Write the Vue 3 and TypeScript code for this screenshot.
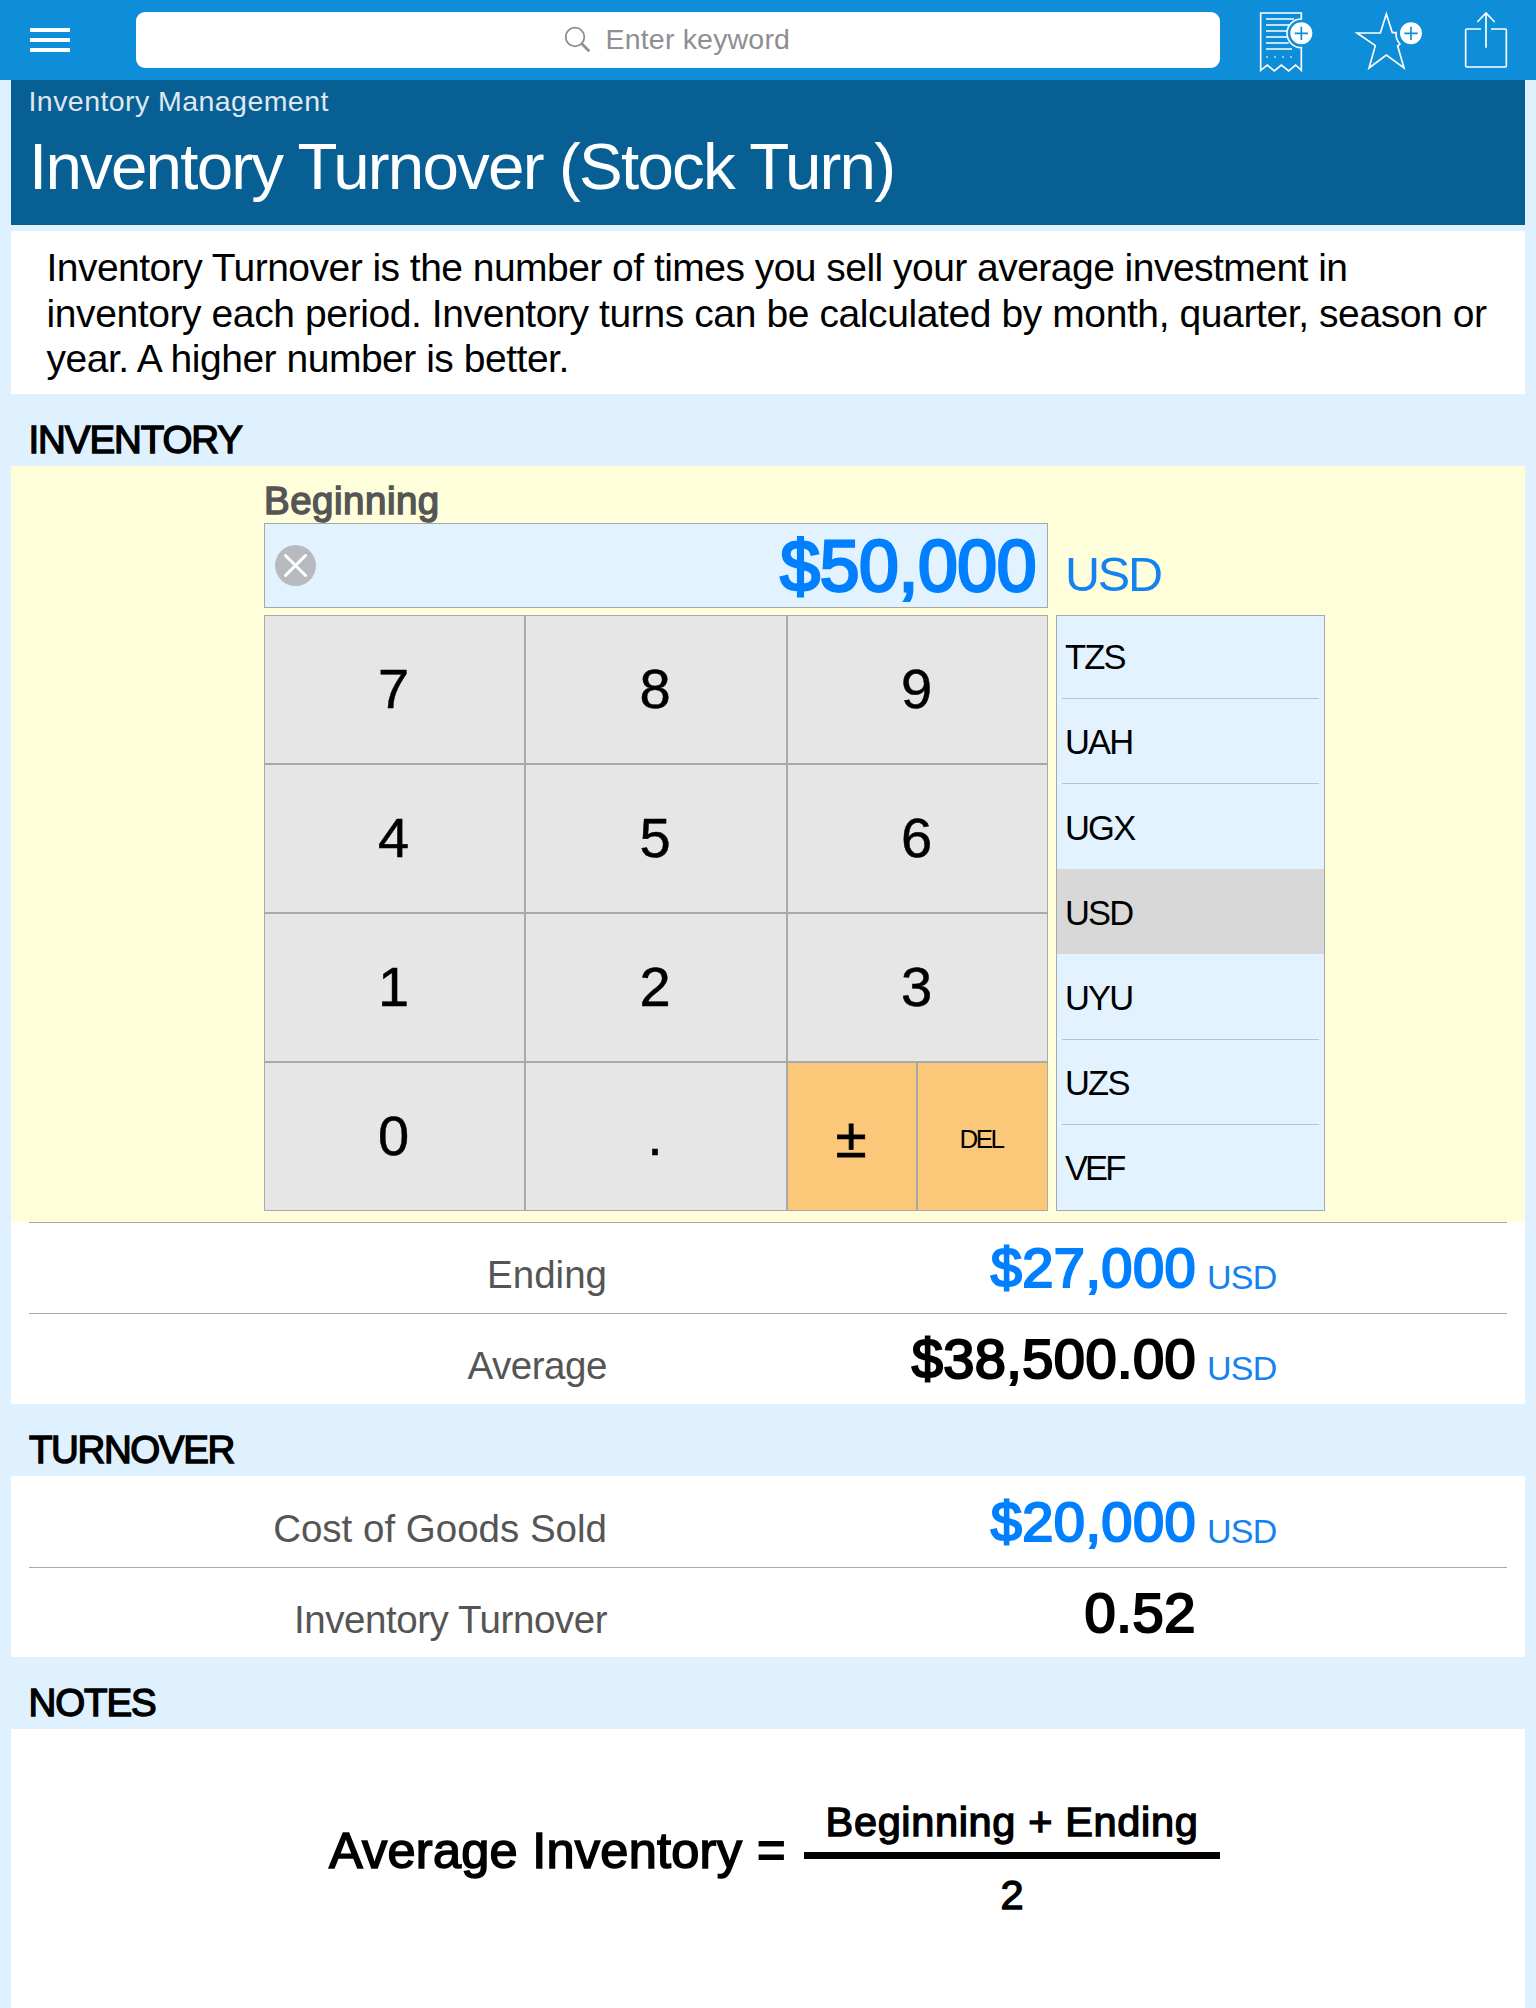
<script setup lang="ts">
interface Row {
  label: string
  value: string
  unit?: string
  editable?: boolean
}

const description: string[] = [
  'Inventory Turnover is the number of times you sell your average investment in',
  'inventory each period. Inventory turns can be calculated by month, quarter, season or',
  'year. A higher number is better.',
]
const digits: string[] = ['7', '8', '9', '4', '5', '6', '1', '2', '3', '0', '.']
const currencies: string[] = ['TZS', 'UAH', 'UGX', 'USD', 'UYU', 'UZS', 'VEF']
const selected = 'USD'

const inventoryRows: Row[] = [
  { label: 'Ending', value: '$27,000', unit: 'USD', editable: true },
  { label: 'Average', value: '$38,500.00', unit: 'USD' },
]
const turnoverRows: Row[] = [
  { label: 'Cost of Goods Sold', value: '$20,000', unit: 'USD', editable: true },
  { label: 'Inventory Turnover', value: '0.52' },
]
</script>

<template>
  <div class="app">
    <header class="topbar">
      <div class="menu"><i></i><i></i><i></i></div>
      <div class="search">
        <svg width="28" height="28" viewBox="0 0 28 28" fill="none" stroke="#8e8e93">
          <circle cx="11" cy="11" r="9.3" stroke-width="1.8" />
          <path d="M17.6 17.6L25.3 25.3" stroke-width="2.8" />
        </svg>
        <span>Enter keyword</span>
      </div>
      <div class="actions">
        <svg width="60" height="80" viewBox="60 0 180 240" fill="none" stroke="#fff" stroke-width="5">
          <path d="M196 57V39H74V211L94 195L115 213L136 195L158 213L179 195L196 211V143A43 43 0 0 1 196 57Z" />
          <path d="M90 57H174M90 75H160M90 93H153M90 111H153M90 129H158M90 147H168" />
          <path d="M91 171H95M115 171H119M139 171H143M163 171H167" />
          <circle cx="196" cy="100" r="33" fill="#fff" stroke="none" />
          <path d="M176 100H216M196 80V120" stroke="#0e8cd8" />
        </svg>
        <svg width="75" height="80" viewBox="345 0 225 240" fill="none" stroke="#fff" stroke-width="5">
          <path d="M451 42L433 99H363L418 137L399 204L451 165L504 204L485 138L492 132A45 45 0 0 1 480 98H469Z" />
          <circle cx="525" cy="100" r="33" fill="#fff" stroke="none" />
          <path d="M505 100H545M525 80V120" stroke="#0e8cd8" />
        </svg>
        <svg width="50" height="80" viewBox="675 0 150 240" fill="none" stroke="#fff" stroke-width="5">
          <path d="M735 87H692Q689 87 689 90V198Q689 201 692 201H808Q811 201 811 198V90Q811 87 808 87H765" />
          <path d="M750 143V39M724 66L750 39L776 66" />
        </svg>
      </div>
    </header>

    <main>
      <div class="hero">
        <div class="crumb">Inventory Management</div>
        <h1>Inventory Turnover (Stock Turn)</h1>
      </div>

      <p class="desc"><span v-for="line in description" :key="line">{{ line }} </span></p>

      <h2>INVENTORY</h2>
      <section class="editor">
        <div class="editor-label">Beginning</div>
        <div class="entry">
          <div class="field">
            <svg width="41" height="41" viewBox="0 0 41 41">
              <circle cx="20.5" cy="20.5" r="20.5" fill="#b7bbbf" />
              <path d="M10.5 10.5L30.5 30.5M30.5 10.5L10.5 30.5" stroke="#fff" stroke-width="3" stroke-linecap="round" />
            </svg>
            <span>$50,000</span>
          </div>
          <div class="entry-unit">USD</div>
        </div>
        <div class="pads">
          <div class="keypad">
            <div v-for="d in digits" :key="d" class="key">{{ d }}</div>
            <div class="split">
              <div class="key op sign">±</div>
              <div class="key op del">DEL</div>
            </div>
          </div>
          <div class="picker">
            <ul>
              <li v-for="c in currencies" :key="c" :class="{ on: c === selected }"><span>{{ c }}</span></li>
            </ul>
          </div>
        </div>
      </section>
      <section class="rows lined">
        <div v-for="r in inventoryRows" :key="r.label" class="row">
          <span class="label">{{ r.label }}</span>
          <span class="value" :class="{ editable: r.editable }">{{ r.value }}</span>
          <span v-if="r.unit" class="unit">{{ r.unit }}</span>
        </div>
      </section>

      <h2 class="turnover">TURNOVER</h2>
      <section class="rows">
        <div v-for="r in turnoverRows" :key="r.label" class="row">
          <span class="label">{{ r.label }}</span>
          <span class="value" :class="{ editable: r.editable, plain: !r.unit }">{{ r.value }}</span>
          <span v-if="r.unit" class="unit">{{ r.unit }}</span>
        </div>
      </section>

      <h2>NOTES</h2>
      <section class="notes">
        <div class="formula-name">Average Inventory <b>=</b></div>
        <div class="fraction">
          <div class="num">Beginning + Ending</div>
          <div class="bar"></div>
          <div class="den">2</div>
        </div>
      </section>
    </main>
  </div>
</template>

<style>
body { background: #dff1fe; }
</style>

<style scoped>
.app {
  width: 1536px;
  height: 2008px;
  overflow: hidden;
  background: #dff1fe;
  font-family: "Liberation Sans", Arial, sans-serif;
  color: #000;
  white-space: nowrap;
}
.topbar {
  height: 80px;
  box-sizing: border-box;
  background: #0e8dd9;
  display: flex;
  align-items: center;
  padding-left: 30px;
}
.menu { width: 40px; display: flex; flex-direction: column; gap: 6px; }
.menu i { height: 4px; background: #fff; }
.search {
  width: 1084px;
  height: 56px;
  margin-left: 66px;
  border-radius: 9px;
  background: #fff;
  box-sizing: border-box;
  padding-left: 428px;
  display: flex;
  align-items: center;
  color: #8e8e93;
  font-size: 28.5px;
  letter-spacing: 0.19px;
}
.search span { margin-left: 13.5px; line-height: 54px; height: 56px; }
.actions { display: flex; margin-left: 36px; height: 80px; }
.actions svg { display: block; flex: none; }
.actions svg:nth-child(2) { margin-left: 35px; }
.actions svg:nth-child(3) { margin-left: 35px; }

main { padding: 0 11px; }
.hero {
  height: 145px;
  background: #085f94;
  color: #fff;
  padding-left: 17.5px;
  box-sizing: border-box;
}
.crumb { font-size: 28.5px; line-height: 42px; letter-spacing: 0.44px; color: #dfe8f0; }
h1 { margin: 5px 0 0 0.5px; font-weight: 400; font-size: 65.5px; line-height: 80px; letter-spacing: -1.8px; }

.desc {
  margin: 6px 0 0;
  height: 163px;
  box-sizing: border-box;
  padding: 14px 0 0 35.5px;
  background: #fff;
  font-size: 39px;
  line-height: 45.6px;
}
.desc span { display: block; letter-spacing: -0.53px; }
.desc span:nth-child(2) { letter-spacing: -0.4px; }
.desc span:nth-child(3) { letter-spacing: -0.48px; }

h2 {
  margin: 0;
  height: 72px;
  padding-left: 17.5px;
  font-size: 38.5px;
  line-height: 91px;
  font-weight: 400;
  letter-spacing: -1.1px;
  -webkit-text-stroke: 1.4px #000;
}
h2.turnover { letter-spacing: -1.4px; padding-left: 18px; }

.editor { background: #feffda; height: 756px; box-sizing: border-box; padding: 11px 0 0 253px; }
.editor-label {
  height: 46px;
  line-height: 47px;
  font-size: 38.5px;
  color: #555;
  letter-spacing: 0.5px;
  -webkit-text-stroke: 1.5px #555;
}
.entry { display: flex; height: 85px; }
.field {
  width: 784px;
  box-sizing: border-box;
  border: 1px solid #a6a9ab;
  background: #e3f2ff;
  display: flex;
  justify-content: space-between;
  padding: 0 11px 0 10px;
}
.field svg { margin-top: 21px; }
.field span {
  font-size: 71.5px;
  line-height: 85px;
  color: #007fff;
  letter-spacing: -0.4px;
  -webkit-text-stroke: 2.8px #007fff;
}
.entry-unit { margin-left: 17px; font-size: 48.5px; line-height: 102px; letter-spacing: -2.2px; color: #1482f0; }

.pads { display: flex; gap: 8px; margin-top: 7px; }
.keypad { display: grid; grid-template-columns: 261px 262px 261px; grid-auto-rows: 149px; }
.key {
  box-sizing: border-box;
  height: 149px;
  border: 1px solid #a9a9a9;
  background: #e6e6e6;
  text-align: center;
  padding-right: 2px;
  font-size: 56px;
  line-height: 146px;
  -webkit-text-stroke: 0.5px #000;
}
.split { display: grid; grid-template-columns: 130px 131px; }
.op { background: #fbc778; }
.sign { line-height: 149px; -webkit-text-stroke-width: 0.8px; }
.del { font-size: 26px; line-height: 152px; letter-spacing: -2.5px; padding-right: 3px; -webkit-text-stroke-width: 0; }

.picker {
  width: 269px;
  height: 596px;
  box-sizing: border-box;
  border: 1px solid #a6a9ab;
  background: #e3f2ff;
  overflow: hidden;
}
.picker ul { list-style: none; margin: -2.8px 0 0; padding: 0; }
.picker li { height: 85.2px; padding: 0 5px; font-size: 34.5px; line-height: 89px; letter-spacing: -1.8px; }
.picker span { display: block; box-sizing: border-box; height: 85.6px; padding-left: 3px; border-bottom: 1px solid #b6c3cf; }
.picker li.on { background: #d8d8d8; }
.picker li:last-child { letter-spacing: -2.9px; }
.picker li.on span, .picker li:nth-child(3) span, .picker li:last-child span { border-color: transparent; }

.rows { background: #fff; padding: 0 18px; height: 181px; }
.rows.lined { height: 182px; }
.row { height: 91px; box-sizing: border-box; border-top: 1px solid transparent; display: flex; align-items: flex-start; }
.rows.lined .row, .row + .row { border-top-color: #a9a9a9; }
.label { width: 578px; text-align: right; font-size: 38.5px; line-height: 103px; color: #555; letter-spacing: 0; }
.row + .row .label { letter-spacing: -0.45px; }
.value {
  width: 589px;
  text-align: right;
  font-size: 56px;
  line-height: 90px;
  letter-spacing: 0.4px;
  -webkit-text-stroke: 2.2px #000;
}
.value.editable { color: #007fff; -webkit-text-stroke-color: #007fff; }
.value.plain { letter-spacing: 0.6px; }
.unit { margin-left: 11px; font-size: 34px; line-height: 108px; letter-spacing: -0.8px; color: #1482f0; }

.notes { background: #fff; height: 279px; box-sizing: border-box; padding: 68px 0 0 318px; display: flex; }
.formula-name { margin-top: 23.5px; width: 475px; font-size: 50.5px; line-height: 60px; letter-spacing: 0.25px; -webkit-text-stroke: 1.6px #000; }
.formula-name b { -webkit-text-stroke-width: 0; }
.fraction { width: 416px; text-align: center; font-size: 41.5px; line-height: 50px; -webkit-text-stroke: 1.4px #000; }
.num { letter-spacing: 0.65px; }
.bar { height: 7px; margin: 5px 0 11px; background: #000; }
</style>
